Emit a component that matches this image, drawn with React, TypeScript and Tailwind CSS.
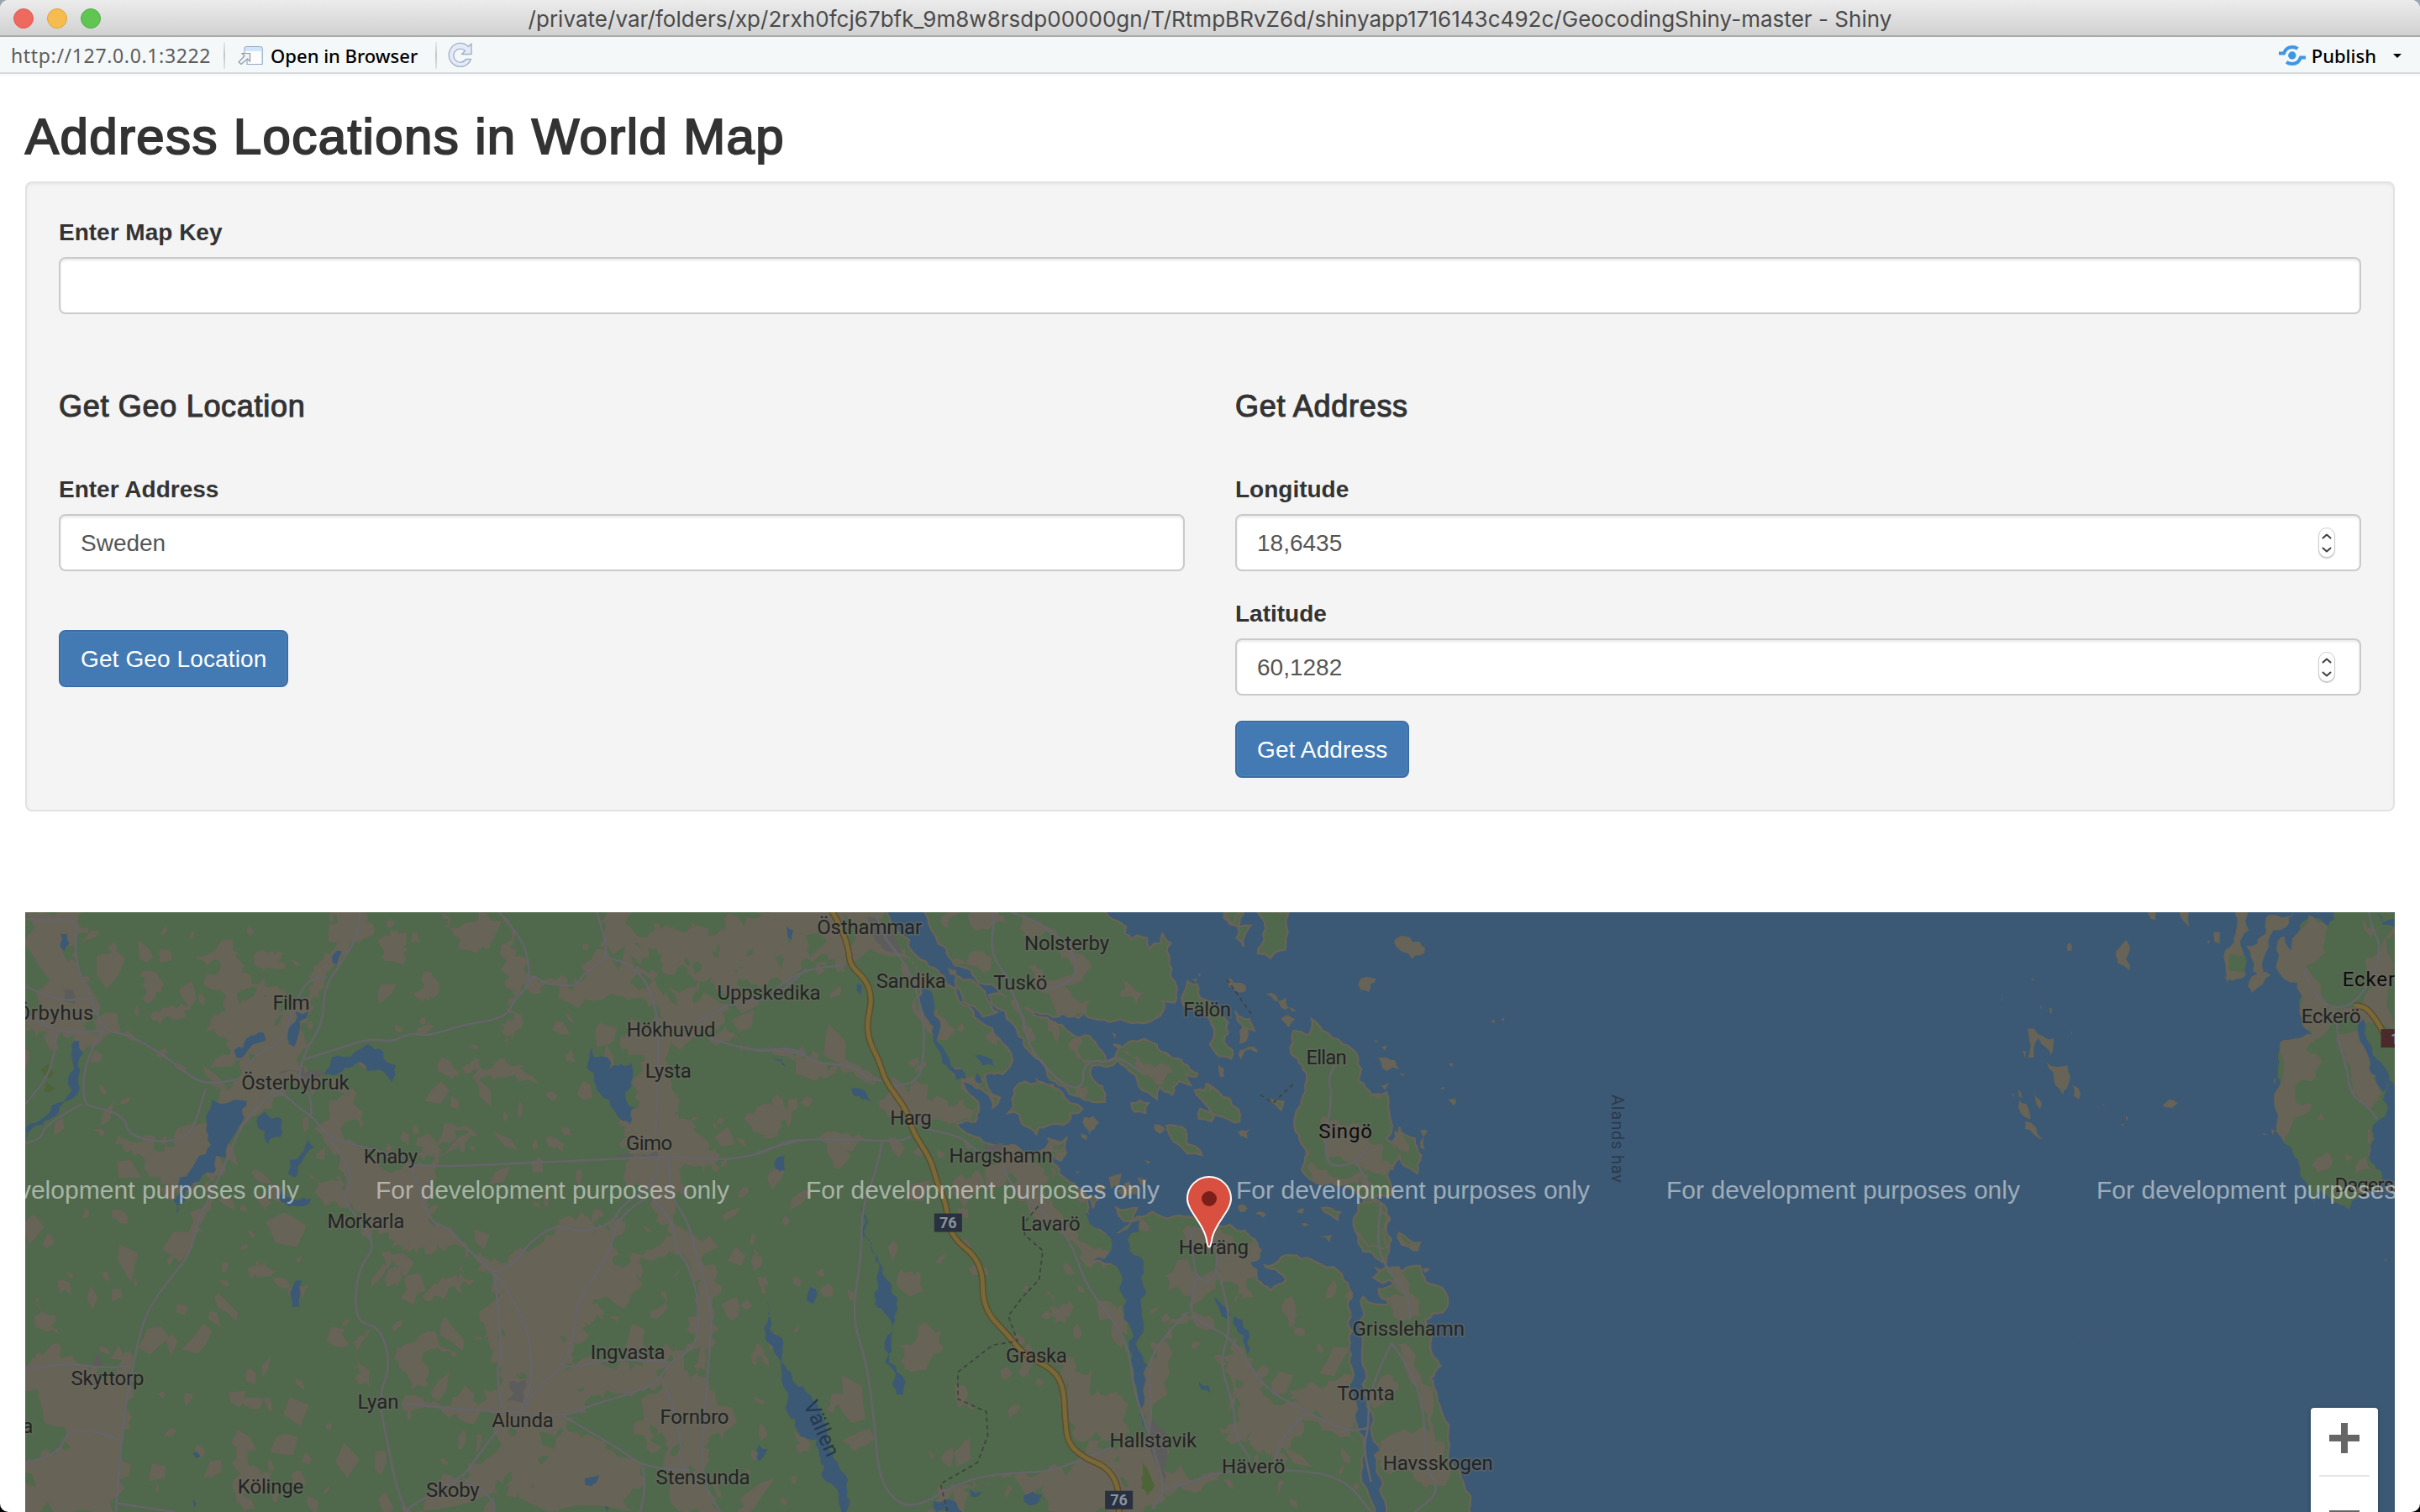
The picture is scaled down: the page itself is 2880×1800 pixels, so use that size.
import type { ReactNode } from "react";

type Pt = [number, number];
type Tile = { x: number; y: number; sx: number; sy: number };

// Map sheets: origin on the map and units-to-pixels scale of each one.
const W: Tile = { x: -30, y: -6, sx: 0.61224, sy: 0.45918 };
const M: Tile = { x: 870, y: -6, sx: 0.61224, sy: 0.45918 };
const E: Tile = { x: 1830, y: -6, sx: 0.65051, sy: 0.45918 };
const N: Tile = { x: 970, y: -6, sx: 1 / 3, sy: 1 / 3 };

const GREEN = "#50684c";
const BROWN = "#676357";
const WATER = "#3b5974";
const ROAD = "#656468";

function rng(seed: number) {
  let s = seed;
  return () => {
    s = (s * 1664525 + 1013904223) % 4294967296;
    return s / 4294967296;
  };
}

function pts(t: Tile, s: string): Pt[] {
  return s
    .trim()
    .split(/\s+/)
    .map((p) => {
      const [a, b] = p.split(",").map(Number);
      return [t.x + a * t.sx, t.y + b * t.sy] as Pt;
    });
}

// Breaks long edges up with small sideways steps, for a ragged shore line.
function rough(p: Pt[], amp: number, close = true): Pt[] {
  let cur = p;
  const r = rng(Math.round(p[0][0] * 7 + p[0][1] * 13 + p.length * 101) >>> 0);
  for (let k = 0; k < 3; k++) {
    const next: Pt[] = [];
    cur.forEach((a, i) => {
      next.push(a);
      if (i === cur.length - 1 && !close) return;
      const b = cur[(i + 1) % cur.length];
      const dx = b[0] - a[0];
      const dy = b[1] - a[1];
      const len = Math.hypot(dx, dy);
      if (len < 9 || len > 500) return;
      const d = (r() - 0.5) * 2 * amp * Math.min(len * 0.2, 7);
      next.push([(a[0] + b[0]) / 2 - (dy / len) * d, (a[1] + b[1]) / 2 + (dx / len) * d]);
    });
    cur = next;
  }
  return cur;
}

function d(p: Pt[], close = true) {
  return "M" + p.map(([x, y]) => `${x.toFixed(1)} ${y.toFixed(1)}`).join("L") + (close ? "Z" : "");
}

function shapes(t: Tile, list: string[], amp = 1) {
  return list.map((s) => d(rough(pts(t, s), amp))).join("");
}

function smooth(t: Tile, s: string) {
  const p = pts(t, s);
  let out = `M${p[0][0].toFixed(1)} ${p[0][1].toFixed(1)}`;
  for (let i = 1; i < p.length - 1; i++) {
    const mx = (p[i][0] + p[i + 1][0]) / 2;
    const my = (p[i][1] + p[i + 1][1]) / 2;
    out += `Q${p[i][0].toFixed(1)} ${p[i][1].toFixed(1)} ${mx.toFixed(1)} ${my.toFixed(1)}`;
  }
  const l = p[p.length - 1];
  return out + `L${l[0].toFixed(1)} ${l[1].toFixed(1)}`;
}

// Small fields scattered between the forests.
function fields(seed: number, n: number, x0: number, y0: number, x1: number, y1: number, size: number) {
  const r = rng(seed);
  let out = "";
  for (let i = 0; i < n; i++) {
    const cx = x0 + r() * (x1 - x0);
    const cy = y0 + r() * (y1 - y0);
    const k = 4 + Math.floor(r() * 4);
    const rot = 1.57 + (r() - 0.5) * 2.2;
    const big = size * (0.35 + r() * r() * 1.3);
    const flat = 0.35 + r() * 0.5;
    const p: Pt[] = [];
    for (let j = 0; j < k; j++) {
      const a = (j / k) * 6.28;
      const q = big * (0.35 + r() * 0.9);
      const u = Math.cos(a) * q;
      const v = Math.sin(a) * q * flat;
      p.push([cx + u * Math.cos(rot) - v * Math.sin(rot), cy + u * Math.sin(rot) + v * Math.cos(rot)]);
    }
    out += d(p);
  }
  return out;
}

const MAINLAND =
  "-1550,5 258,5 267,44 299,83 321,134 354,163 370,196 389,210 395,240 425,283 460,312 490,363 500,396 495,414 479,436 446,436 472,490 460,515 452,490 435,472 403,454 408,472 425,494 435,519 427,559 392,563 403,577 435,595 479,617 512,624 540,640 570,600 603,600 605,640 575,655 590,690 610,710 640,740 645,790 665,825 690,850 715,830 740,800 770,787 810,800 840,800 880,815 920,820 950,835 975,870 980,910 960,920 975,965 1000,990 1028,965 1000,940 985,925 1020,905 1060,910 1100,925 1140,950 1160,1000 1160,1100 1155,1180 1170,1300 1180,1450 1200,1600 -1550,1600";

const PENINSULA =
  "290,0 930,0 960,35 990,50 1020,70 1015,95 1040,115 1060,100 1095,110 1105,150 1120,130 1145,130 1150,95 1165,120 1180,130 1165,155 1175,190 1180,250 1200,280 1195,340 1150,335 1155,365 1120,400 1060,412 1000,400 920,402 885,393 870,378 850,395 820,390 800,375 780,390 740,380 700,375 660,357 690,385 740,395 790,420 830,455 890,460 930,510 950,550 980,540 1000,495 975,490 1010,500 1060,480 1085,470 1130,490 1175,530 1225,560 1275,595 1270,605 1235,595 1250,635 1210,620 1185,670 1140,640 1130,685 1110,670 1080,655 1060,615 1020,570 990,545 950,570 900,565 890,590 935,640 945,695 900,695 850,675 800,640 740,600 700,540 670,510 655,470 620,420 590,370 560,360 530,315 590,320 560,290 480,250 440,215 390,180 350,130 325,80";

const SINGO =
  "1045,320 1075,330 1080,290 1100,320 1140,355 1170,390 1170,450 1195,490 1225,480 1230,530 1225,600 1240,620 1250,570 1280,600 1285,690 1260,670 1250,640 1230,680 1235,745 1200,755 1225,780 1230,890 1225,920 1200,900 1170,870 1165,840 1180,770 1140,715 1100,720 1060,680 1070,640 1055,590 1060,500 1070,450 1040,380";

const GRISSLEHAMN =
  "1180,1010 1230,1030 1210,990 1240,970 1200,960 1225,930 1290,930 1300,970 1340,1000 1335,1050 1300,1070 1310,1130 1330,1190 1310,1220 1330,1300 1345,1360 1355,1450 1370,1480 1385,1520 1385,1600 1220,1600 1215,1480 1195,1350 1185,1200 1175,1100";

const ISLANDS_N = [
  "1240,265 1275,275 1300,330 1360,380 1385,450 1370,480 1400,510 1395,540 1340,520 1320,490 1335,460 1300,380 1225,350 1230,300",
  "620,650 660,623 740,635 800,680 820,700 865,720 850,735 820,735 815,765 740,780 710,785 700,810 680,790 650,775 640,740 600,735 615,720",
  "1165,780 1220,785 1290,885 1240,880 1180,820",
  "1310,630 1350,660 1420,720 1425,765 1370,750 1300,700 1265,655 1300,655",
  "1285,720 1335,745 1325,765 1280,755",
  "1040,700 1100,700 1090,735 1050,730",
  "535,670 570,680 545,715",
  "1410,370 1460,400 1478,440 1440,430",
  "1370,10 1440,10 1420,70 1390,60",
  "1420,70 1465,65 1440,140 1415,110",
  "415,245 470,260 520,320 560,375 510,390 440,340 415,285",
  "740,825 770,850 810,820 800,860 760,870",
];

const ISLANDS_M = [
  "975,13 1035,13 1030,50 1028,110 1000,132 975,120 985,70",
  "910,13 945,13 925,45",
  "1170,770 1200,760 1225,800 1228,880 1190,880 1165,840",
  "1250,845 1290,870 1285,890 1255,875",
  "1000,500 1025,505 1020,525",
  "700,780 740,780 730,815 705,800",
  "645,750 665,755 655,780",
  "1100,780 1135,790 1130,810",
];

const SKERRIES_M = [
  "1240,95 1262,75 1275,90 1300,105 1290,125 1275,135 1255,115",
  "1170,200 1185,180 1205,185 1190,220 1175,215",
  "990,225 1030,235 1050,270 1020,260",
  "1020,290 1048,290 1035,312",
  "915,185 945,200 950,220 930,215",
  "1200,385 1225,390 1250,420 1225,425",
  "1245,845 1290,880 1280,890 1255,870",
  "1095,855 1120,850 1115,870",
  "870,457 890,470 880,485",
  "1345,405 1355,405 1352,415",
  "1345,500 1358,495 1355,515",
  "1428,295 1435,290 1435,302",
  "1448,290 1455,285 1452,296",
  "1330,470 1337,465 1336,474",
  "1200,345 1208,345 1205,352",
  "1215,362 1226,358 1222,372",
  "1250,430 1262,432 1256,438",
  "1290,580 1305,580 1300,630 1290,610",
  "1295,940 1310,940 1300,948",
  "1205,460 1230,455 1222,475",
  "755,655 766,660 762,666",
  "685,700 710,690 705,725 690,730",
  "700,735 725,710 740,745 715,755",
  "740,700 760,705 755,730",
  "660,715 680,725 675,745 660,735",
  "620,745 640,735 640,765 625,760",
  "935,775 955,780 940,790",
  "970,795 985,790 1000,800 985,805",
  "1060,820 1075,823 1065,828",
  "1050,790 1065,780 1062,795",
  "1175,700 1190,690 1200,720 1185,735",
];

const SKERRIES_N = [
  "870,750 925,770 890,815",
  "1120,775 1160,790 1140,810",
  "695,605 760,630 775,655 740,635",
  "1380,260 1430,270 1450,295 1410,295",
  "1425,510 1490,510 1490,520 1440,522 1430,545",
  "1425,440 1455,430 1450,480 1425,490",
  "400,570 440,580 435,610 400,600",
  "385,215 415,225 415,245 390,240",
  "1350,560 1372,605 1355,605",
  "1408,797 1462,790 1455,828",
  "1255,258 1275,255 1270,268",
  "1276,235 1287,240 1284,250",
  "970,445 985,455 980,470",
  "770,880 810,880 790,910 765,900",
  "750,930 770,940 755,970",
  "858,808 882,815 880,832",
  "1095,905 1107,908 1100,917",
  "840,942 854,945 846,952",
];

const ISLES_E = [
  "1070,13 1085,13 1085,34 1075,30",
  "1128,13 1145,13 1146,50 1138,40",
  "1018,105 1030,85 1038,105 1030,135 1038,165 1015,145",
  "1190,65 1202,65 1202,95 1192,90",
  "1230,10 1253,10 1255,60 1240,100 1250,175 1215,185 1212,110 1228,90",
  "1290,20 1340,15 1325,50 1300,60 1280,180 1262,165 1250,100 1270,95",
  "1305,110 1320,75 1330,110 1350,130 1350,185 1330,195 1310,170",
  "1210,180 1222,180 1216,205",
  "1260,180 1295,175 1280,200 1260,222 1253,205",
  "850,315 862,315 870,330 898,340 892,385 885,365 870,340 862,390 850,390 853,345",
  "885,402 923,410 922,470 915,487 900,460",
  "932,460 943,470 944,498 935,490",
  "862,475 873,500 873,523 866,510",
  "835,500 848,510 855,550 838,535",
  "846,555 865,570 878,602 862,590 845,575",
  "1096,515 1110,498 1125,508 1115,520",
  "831,470 838,480 840,495 833,490",
  "840,370 847,375 845,392",
  "922,98 928,92 931,112 923,114",
  "856,186 861,184 860,192",
  "802,236 805,238 804,244",
  "873,256 876,256 875,267",
  "890,260 894,262 895,276 891,274",
  "930,322 932,322 931,332",
  "1029,541 1034,545 1031,556",
  "1022,562 1026,562 1024,570",
  "821,480 826,486 824,493",
  "1178,88 1184,86 1182,96",
  "988,510 992,513 988,514",
  "1295,575 1302,578 1298,590",
  "1280,586 1288,587 1284,592",
  "1300,450 1304,440 1304,462",
  "1503,912 1507,912 1506,921",
];

const ALAND =
  "1348,60 1365,20 1385,30 1400,50 1412,5 1600,5 1600,460 1522,462 1508,445 1500,500 1510,520 1490,555 1480,580 1490,600 1478,660 1500,690 1500,710 1460,750 1438,785 1420,770 1400,750 1380,735 1373,768 1365,730 1350,700 1345,655 1330,620 1315,600 1305,570 1322,520 1312,470 1308,430 1312,350 1330,342 1370,330 1360,300 1372,280 1348,260 1355,200 1360,140";

const WEST_FIELDS = [
  "50,13 158,13 148,80 160,180 190,240 200,330 150,370 110,330 50,290",
  "380,125 425,97 465,135 470,170 490,200 530,205 555,230 540,290 580,250 600,180 635,180 630,210 600,300 585,380 600,430 560,450 530,520 480,560 440,680 410,770 380,860 360,900 330,930 390,780 400,690 330,760 300,700 270,680 270,640 230,590 290,590 340,620 400,560 405,450 470,430 440,390 450,330 400,320 410,290 440,270 430,150",
  "480,125 520,120 555,160 500,155",
  "640,13 710,13 700,90 660,150 630,180 600,180 640,120",
  "640,500 685,470 695,520 700,575 640,570",
  "640,620 690,610 740,640 800,670 850,700 830,760 870,830 910,890 900,910 850,870 840,900 780,890 800,850 760,890 720,840 660,780 610,740 600,690 670,720 660,660",
  "810,600 920,580 930,590 850,620 870,650 810,640",
  "860,13 950,13 960,70 930,120 900,100 880,60 860,50",
  "970,13 1000,60 1020,130 1040,180 1080,190 1140,180 1180,130 1230,150 1250,220 1170,240 1050,210 1000,270 985,370 970,300 1000,230 990,180",
  "1180,13 1230,13 1260,110 1230,150 1190,120",
  "1270,40 1330,20 1400,60 1470,30 1568,40 1568,120 1520,150 1490,200 1430,150 1400,220 1350,190 1290,170 1260,100",
  "1240,150 1290,230 1400,250 1410,290 1370,330 1440,350 1470,370 1380,350 1300,370 1300,420 1330,480 1320,550 1370,600 1400,640 1320,680 1340,740 1310,760 1350,850 1370,930 1390,1050 1385,1140 1380,1250 1420,1350 1380,1430 1400,1568 1340,1568 1300,1400 1250,1300 1310,1180 1350,1130 1360,1000 1330,900 1300,820 1270,730 1210,700 1200,560 1240,520 1250,420 1210,370 1270,330 1260,260",
  "910,900 960,910 1000,890 1080,830 1100,800 1150,850 1200,790 1210,850 1190,920 1240,900 1310,880 1250,980 1180,1010 1150,1030 1200,1080 1120,1080 1110,1160 1100,1200 1160,1170 1250,1190 1300,1180 1280,1240 1240,1250 1140,1310 1100,1320 1160,1380 1250,1450 1230,1568 800,1568 850,1500 910,1440 960,1360 950,1310 860,1310 780,1290 880,1270 970,1250 960,1150 920,1120 930,1050 970,1030 960,960",
  "850,410 930,400 980,390 1020,410 970,440 930,460 900,420 880,450",
  "640,1100 720,1095 700,1140 720,1245 700,1210 690,1130",
  "780,1140 850,1120 890,1160 830,1190 800,1250 780,1200",
  "50,1190 110,1130 120,1170 190,1180 240,1200 250,1150 270,1160 240,1300 235,1400 220,1568 50,1568 50,1440 110,1420 130,1360 80,1290",
  "70,1010 110,1060 115,1110 90,1100",
  "300,270 370,250 350,290 310,310",
  "270,180 310,185 315,220 290,250",
  "750,40 790,80 750,140 740,100",
  "820,180 850,190 830,230 790,225",
  "490,930 540,940 600,980 560,1010 500,960",
  "860,960 900,930 900,1000 840,1020 820,1010",
  "450,1440 475,1390 490,1460 520,1500 450,1500",
  "1500,500 1550,490 1530,550 1500,600 1480,580",
];

const MID_FIELDS = [
  "0,13 250,13 270,80 300,130 330,220 340,330 310,280 290,130 240,120 180,160 120,130 60,200 20,170 50,110",
  "330,230 400,300 380,330 340,330",
  "10,370 110,370 120,400 200,410 240,440 230,460 140,440 110,450",
  "240,500 310,450 370,500 430,520 420,560 330,570 300,570 270,540",
  "0,520 80,500 50,570 10,590",
  "120,600 210,600 160,680 140,640",
  "470,610 540,640 570,700 560,760 600,810 640,870 690,900 640,930 600,850 530,790 480,700 490,660",
  "0,1130 15,1150 5,1190",
  "270,1120 340,1090 360,1100 330,1200 280,1180",
  "280,940 320,960 300,1010 280,990",
  "500,1150 600,1190 590,1290 620,1380 690,1400 720,1340 700,1260 640,1290 650,1200 600,1170",
  "560,1000 610,1020 600,1080 570,1060",
  "680,1020 720,1070 730,1150 690,1110",
  "760,1190 800,1080 870,1060 900,1100 830,1080 800,1130 770,1330 800,1400 790,1460 900,1470 870,1500 790,1520 740,1568 600,1568 560,1500 440,1500 370,1520 330,1568 300,1568 420,1470 550,1470 640,1430 740,1400 760,1320",
  "840,1000 860,960 900,950 900,880 830,870 850,830 960,870 970,960 930,1030 900,960 850,1050",
  "910,1110 950,1150 980,1250 1070,1310 1150,1340 1180,1390 1060,1330 1020,1400 1030,1440 960,1450 960,1380 900,1350 940,1330 910,1200",
  "1040,1050 1060,1045 1050,1100",
  "1090,1240 1160,1230 1165,1330 1060,1310",
  "160,1260 190,1270 150,1310",
  "400,690 430,680 410,770 400,800",
];

const MID_FIELDS_EAST = [
  "1100,540 1130,550 1170,560 1220,620 1240,680 1200,690 1170,670 1110,650",
  "1080,620 1110,680 1180,690 1170,720 1080,700",
  "1240,580 1260,600 1270,650 1250,630",
  "1195,480 1225,500 1215,490",
  "1200,930 1250,930 1290,1060 1250,1070 1220,1010 1260,1010",
  "1230,1130 1270,1140 1310,1330 1300,1450 1290,1300",
  "1185,1250 1230,1210 1250,1240 1200,1300",
  "1200,1420 1300,1340 1340,1400 1340,1500 1300,1510 1250,1460",
];

const PENINSULA_FIELDS = [
  "380,20 430,20 390,80 360,60",
  "470,10 560,10 600,60 530,80 460,50",
  "650,20 740,70 780,100 700,110 640,75",
  "395,190 510,155 540,220 480,210",
  "670,210 760,260 830,240 790,180 820,120 870,170 850,270 800,280 840,330 890,330 880,380 760,350 700,290",
  "1000,255 1040,280 1090,300 1060,330 1075,355 1000,320",
  "830,470 860,465 850,520 900,550 870,560 820,510",
  "1010,510 1060,530 1080,560 1165,560 1190,590 1140,640 1080,600",
  "610,330 650,380 690,450 700,540 650,440",
  "720,390 780,430 770,500 740,440",
  "850,640 880,640 875,680 840,670",
];

const EAST_FIELDS = [
  "1348,60 1365,20 1400,50 1395,120 1360,150 1380,190 1400,260 1440,260 1480,210 1470,130 1490,120 1522,50 1522,320 1480,300 1440,280 1400,320 1360,370 1390,400 1350,450 1340,500 1370,510 1335,560 1320,610 1305,570 1312,350 1370,330 1348,260",
  "1420,330 1460,310 1480,400 1500,480 1480,520 1440,480 1430,400",
  "1370,670 1400,635 1410,660 1380,690",
  "1470,560 1480,600 1470,650 1490,690 1450,690 1480,640",
  "1430,640 1447,650 1435,662",
  "1378,550 1385,530 1395,552",
  "1460,30 1490,60 1480,80 1465,60",
];

const LAKES_W = [
  "118,70 130,70 135,95 125,113 117,95",
  "655,112 665,115 655,148 646,145",
  "575,270 600,270 580,330 572,362 562,355 560,320",
  "455,372 480,340 512,325 517,345 475,385 460,390",
  "630,435 645,390 690,375 715,355 745,375 750,400 770,410 762,455 745,425 715,425 700,400 670,415 660,430",
  "145,347 153,347 155,470 125,505 95,550 50,602 50,572 90,540 100,515 140,475 133,440",
  "412,498 430,510 455,500 480,503 475,545 455,590 440,650 420,645 415,690 375,715 360,760 342,795 337,760 350,700 380,660 400,640 405,590",
  "500,545 515,530 548,550 545,595 525,600 520,615 515,580 500,565",
  "597,590 612,625 590,650 575,700 560,690 563,655 585,640",
  "550,730 575,760 605,755 600,770 560,775 545,745",
  "575,968 587,968 582,1035 568,1038 564,1000",
  "1142,405 1150,362 1155,390 1180,388 1185,420 1200,410 1228,405 1230,440 1215,480 1225,562 1200,540 1185,500 1165,480 1155,440",
  "1530,48 1542,60 1538,85 1532,80",
  "1510,650 1525,645 1525,680 1508,680",
  "1137,1480 1165,1472 1160,1490 1137,1498",
  "1475,1395 1492,1405 1475,1437",
  "375,1415 383,1412 390,1425 380,1428",
  "375,1535 382,1545 378,1557",
  "1176,1553 1183,1555 1180,1568",
  "1500,390 1520,400 1528,415",
];

const LAKES_M = [
  "205,770 212,830 225,870 250,960 272,1030 270,1070 255,1110 258,1180 290,1230 285,1265 272,1262 270,1220 250,1180 248,1050 238,980 230,900 203,850",
  "18,1020 40,1110 60,1200 100,1260 130,1330 150,1430 172,1470 175,1500 160,1600 150,1500 125,1430 118,1380 60,1310 62,1260 48,1190 15,1090",
  "640,790 690,850 745,810 722,860 748,960 742,1120 752,1210 752,1330 758,1355 750,1340 735,1210 725,1080 720,1020 700,930 655,915 690,890",
  "890,1010 915,1040 918,1070 905,1060",
  "930,1060 945,1070 958,1100 955,1160 948,1110 935,1100",
  "860,1230 880,1240 882,1260 865,1250",
  "185,470 215,485 222,505 190,490",
  "195,200 205,200 203,230",
  "105,985 115,990 110,1028 98,1020",
  "48,645 55,680 45,685 38,670",
  "415,1510 438,1515 425,1530 418,1528",
  "520,1525 555,1522 550,1540 530,1550",
  "345,1540 370,1535 400,1568 350,1568",
  "320,205 330,210 345,270 358,310 350,345 370,380 378,410 400,420 408,445 390,448 375,420 360,380 345,350 345,310 325,270",
  "425,385 460,395 465,415 440,410",
  "430,430 440,455 425,450",
];

const ROADS_W = [
  "50,30 90,35 140,30 150,60 145,110 155,180 180,240 200,320 250,330 320,385 360,430 400,460 470,445",
  "200,320 120,330 70,290 50,280",
  "200,320 165,390 160,510 190,520 240,540 250,590 310,610 360,600 380,560 400,470",
  "110,330 105,420 50,510",
  "160,510 90,560 80,600 50,612",
  "700,13 695,80 660,150 630,210 628,300 590,380 580,450",
  "635,180 600,180 570,260 550,350 510,370 480,410",
  "590,395 650,370 720,340 760,350 800,325 830,335 900,305 950,295 985,280 1000,240 1030,200 1025,110 990,40 970,13",
  "1030,200 1030,170 1060,200 1125,205 1130,175 1175,140 1180,100 1160,13",
  "1175,130 1220,140 1255,190 1275,260 1280,330 1275,590",
  "530,480 540,470 580,520 610,545 640,600 700,620 760,640 800,675 1000,665 1200,652 1330,645 1400,657 1480,640 1530,605 1568,603",
  "530,480 510,510 470,560 440,660 400,770 380,830 370,900 320,980 280,1060 260,1180 240,1320 225,1568",
  "640,600 680,670 680,720 665,760 700,810 730,880 700,930 690,1010 695,1075 740,1090 760,1190 735,1270 755,1400 770,1500 790,1568",
  "605,540 605,490 590,470",
  "800,675 820,750 840,820 870,830 910,890 960,945 1000,1020 1030,1110 1035,1230 1010,1310",
  "960,945 970,1050 975,1170 965,1200 975,1300",
  "960,945 1000,930 1020,880 1080,820 1130,845 1190,820 1210,770 1270,720 1280,650",
  "1260,750 1200,800 1190,880 1150,970 1120,1030 1115,1120 1095,1190 1040,1250 1020,1300",
  "1300,650 1300,740 1340,820 1355,910 1385,1040 1380,1140 1370,1300 1362,1480 1400,1568",
  "1270,760 1310,810 1310,880 1340,930 1360,1030 1355,1140 1300,1180 1280,1230 1230,1260 1150,1290 1100,1320 1020,1310 870,1300 780,1285",
  "1095,1190 1120,1195 1180,1170 1300,1180",
  "970,1350 930,1420 900,1480 800,1550 790,1568",
  "1095,1320 1160,1370 1210,1410 1250,1450 1340,1460",
  "1290,1230 1310,1300 1325,1390 1320,1430 1335,1460",
  "50,1200 120,1180 200,1195 250,1190",
  "50,1440 110,1425 130,1360 175,1355 230,1380",
  "1350,300 1400,265 1420,250 1500,240 1568,160",
  "1380,340 1450,370 1500,370 1530,365 1568,380",
  "50,205 110,245 180,235",
  "900,1480 960,1530 960,1568",
  "1250,1450 1255,1500 1245,1568",
  "225,1545 340,1568",
];

const ROADS_M = [
  "250,80 290,140 320,250 328,340 320,450 268,465",
  "0,372 80,370 115,405 190,410 215,445 245,450",
  "0,638 70,605 140,600 280,608 300,595",
  "40,210 80,165 170,150",
  "245,610 230,700 205,780 205,900 185,1060 215,1180 230,1340 240,1500 300,1568 400,1485 500,1465 560,1465 620,1440 690,1400",
  "330,575 390,590 420,620 450,660",
  "480,670 490,720 560,790 610,860 640,980 700,1080 725,1150 735,1260 760,1350 780,1440 795,1510 770,1560",
  "795,1510 880,1475 920,1460 1080,1460 1150,1490 1195,1568",
  "845,840 850,910 855,965 895,970 895,850 850,830",
  "895,940 915,1010 920,1110 900,1180 930,1300 930,1370 960,1430",
  "855,965 838,1050 870,1080 930,1120 980,1240 1070,1310 1150,1360 1190,1350",
  "838,1050 800,1100 760,1180 770,1300 760,1400",
  "1070,1310 1020,1370 1010,1440",
  "1215,765 1205,850 1220,930 1270,1010 1270,1070",
  "1235,1130 1275,1200 1300,1320 1300,1450 1330,1515 1280,1568",
  "1235,1130 1205,1210 1190,1290 1190,1350 1180,1400 1195,1490",
  "1125,410 1110,440 1120,490 1105,600 1110,675 1165,665 1190,620",
  "1165,660 1190,710 1190,760",
];

const ROADS_N = [
  "545,18 550,60 540,100 545,180 590,240 620,320 650,390 675,500 740,580 800,635 850,648 870,620 865,580 900,545 950,555 990,530 1075,590",
  "610,18 690,45 740,80 820,140 845,210 830,260 770,290 700,285",
  "130,18 135,70 200,165",
];

const HIGHWAY =
  "145,5 165,50 180,110 182,150 215,190 225,240 215,300 220,350 240,400 250,450 295,530 303,580 340,655 350,710 370,770 375,850 440,920 440,1040 490,1110 520,1160 580,1200 598,1250 600,1320 605,1390 640,1430 680,1450 705,1500 705,1580";

type Label = [Tile, number, number, number, string, boolean?];

// Sheet, left edge, baseline, right edge, name.
const LABELS: Label[] = [
  [W, 32, 290, 182, "Örbyhus"],
  [W, 530, 264, 602, "Film"],
  [W, 469, 472, 679, "Österbybruk"],
  [W, 707, 664, 812, "Knaby"],
  [W, 636, 831, 786, "Morkarla"],
  [W, 1218, 334, 1391, "Hökhuvud"],
  [W, 1254, 442, 1344, "Lysta"],
  [W, 1217, 628, 1307, "Gimo"],
  [W, 1148, 1171, 1293, "Ingvasta"],
  [W, 138, 1237, 280, "Skyttorp"],
  [W, 695, 1300, 775, "Lyan"],
  [W, 956, 1347, 1076, "Alunda"],
  [W, 1283, 1339, 1417, "Fornbro"],
  [W, 1275, 1495, 1458, "Stensunda"],
  [W, 462, 1520, 590, "Kölinge"],
  [W, 828, 1527, 932, "Skoby"],
  [W, 43, 1363, 62, "a"],
  [W, 1394, 238, 1595, "Uppskedika"],
  [M, 118, 69, 322, "Östhammar"],
  [M, 521, 109, 686, "Nolsterby"],
  [M, 233, 208, 369, "Sandika"],
  [M, 461, 212, 566, "Tuskö"],
  [M, 830, 283, 923, "Fälön"],
  [M, 1069, 406, 1148, "Ellan"],
  [M, 1093, 597, 1197, "Singö", true],
  [M, 260, 564, 341, "Harg"],
  [M, 375, 661, 576, "Hargshamn"],
  [M, 514, 838, 630, "Lavarö"],
  [M, 821, 898, 957, "Herräng"],
  [M, 1159, 1110, 1377, "Grisslehamn"],
  [M, 485, 1179, 604, "Graska"],
  [M, 1129, 1277, 1241, "Tomta"],
  [M, 687, 1400, 856, "Hallstavik"],
  [M, 905, 1467, 1028, "Häverö"],
  [M, 1218, 1459, 1432, "Havsskogen"],
  [E, 1426, 203, 1544, "Eckerö", true],
  [E, 1351, 299, 1460, "Eckerö"],
  [E, 1412, 738, 1577, "Dagersand"],
];

function Shield({ t, x, y, text, fill }: { t: Tile; x: number; y: number; text: string; fill: string }) {
  const px = t.x + x * t.sx;
  const py = t.y + y * t.sy;
  return (
    <g>
      <rect x={px - 16.5} y={py - 11} width={33} height={22} fill={fill} />
      <text x={px} y={py + 6.5} textAnchor="middle" fontSize={18} fontWeight={700} fill="#8b93a0">
        {text}
      </text>
    </g>
  );
}

function MapDrawing() {
  return (
    <svg className="block h-[714px] w-[2820px]" viewBox="0 0 2820 714" fontFamily="Roboto, sans-serif">
      <defs>
        <clipPath id="mainland">
          <path d={shapes(M, [MAINLAND])} />
        </clipPath>
      </defs>
      <rect width={2820} height={714} fill={WATER} />
      <path d={shapes(M, [MAINLAND])} fill={GREEN} />
      <g clipPath="url(#mainland)">
        <path d={fields(11, 330, 0, 0, 930, 714, 19)} fill={BROWN} />
        <path d={fields(29, 160, 930, 0, 1600, 714, 20)} fill={BROWN} />
        <path d={shapes(W, WEST_FIELDS, 2.4)} fill={BROWN} />
        <path d={shapes(M, MID_FIELDS, 2.2)} fill={BROWN} />
        <path d={fields(71, 26, 560, 400, 800, 714, 15)} fill={GREEN} />
        <path d={fields(83, 46, 700, 0, 1080, 120, 14)} fill={GREEN} />
        <path d={fields(97, 18, 250, 80, 380, 330, 9)} fill={GREEN} />
        <path d={fields(101, 16, 1280, 560, 1560, 714, 14)} fill={GREEN} />
        <path d={shapes(M, [MAINLAND])} fill="none" stroke={BROWN} strokeWidth={5} />
      </g>
      <g stroke={BROWN} strokeWidth={2.5}>
        <path d={shapes(N, [PENINSULA])} fill={GREEN} />
        <path d={shapes(M, [SINGO, GRISSLEHAMN])} fill={GREEN} />
        <path d={shapes(N, ISLANDS_N)} fill={GREEN} />
        <path d={shapes(M, ISLANDS_M)} fill={GREEN} />
      </g>
      <path d={shapes(N, PENINSULA_FIELDS, 1.5) + shapes(M, MID_FIELDS_EAST, 1.5)} fill={BROWN} />
      <path d={shapes(M, SKERRIES_M, 1.6) + shapes(N, SKERRIES_N, 1.4)} fill={BROWN} />
      <path d={shapes(E, [ALAND])} fill={GREEN} />
      <path d={shapes(E, EAST_FIELDS, 1.2) + shapes(E, ISLES_E)} fill={BROWN} />
      <path d={shapes(E, ["1222,120 1248,125 1250,178 1220,165"])} fill={GREEN} />
      <path
        d={shapes(E, [
          "1455,300 1465,290 1480,360 1495,400 1510,430 1500,480 1490,460 1475,420 1465,360",
          "1490,13 1500,40 1522,30 1522,50 1500,45",
          "1482,580 1500,560 1522,550 1522,640 1510,690 1500,705 1478,660",
        ])}
        fill={WATER}
      />
      <path d={shapes(W, LAKES_W, 1.2) + shapes(M, LAKES_M, 1.2)} fill={WATER} />
      <path
        d={
          shapes(W, ["120,208 135,212 145,250 125,245", "540,430 580,425 590,395 592,430 635,432 600,445", "1200,640 1278,634 1280,648 1200,648", "990,1230 1022,1225 1020,1290 985,1280 1000,1260", "190,1155 197,1195 178,1190"], 1) +
          shapes(M, ["215,25 270,80 285,120 255,115 230,80", "445,610 480,612 475,640 445,635", "770,1330 800,1400 795,1500 775,1440"], 1)
        }
        fill="#5d5c5c"
      />
      <path d={shapes(W, ["80,420 95,405 105,430 85,445 108,470 85,478 90,440"]) + shapes(M, ["750,1440 765,1470 775,1500 760,1525 748,1480"])} fill="#4c6437" />
      <g fill="none" stroke={ROAD} strokeWidth={2.6} strokeLinejoin="round">
        {ROADS_W.map((r) => <path key={r} d={smooth(W, r)} />)}
        {ROADS_M.map((r) => <path key={r} d={smooth(M, r)} />)}
        {ROADS_N.map((r) => <path key={r} d={smooth(N, r)} />)}
        <path d={smooth(E, "1475,13 1480,60 1495,90 1490,160 1450,250 1410,265 1375,230 1355,160")} />
        <path d={smooth(E, "1415,290 1418,350 1435,420 1440,485 1475,520 1490,550")} />
      </g>
      <g fill="none" strokeLinejoin="round">
        <path d={smooth(M, HIGHWAY)} stroke="#594e30" strokeWidth={8} />
        <path d={smooth(M, HIGHWAY)} stroke="#7a6936" strokeWidth={5} />
        <path d={smooth(E, "1448,255 1465,255 1485,285 1505,335")} stroke="#594e30" strokeWidth={8} />
        <path d={smooth(E, "1448,255 1465,255 1485,285 1505,335")} stroke="#7a6936" strokeWidth={5} />
      </g>
      <g fill="none" stroke="#3d413d" strokeWidth={1.6} strokeDasharray="5 4">
        <path d={d(pts(M, "548,775 520,820 522,850 557,890 550,965 515,1015 490,1060 508,1125 460,1135 392,1205 392,1275 447,1308 450,1370 430,1440 358,1495 372,1568"), false)} />
        <path d={d(pts(M, "915,187 965,282"), false)} />
        <path d={d(pts(M, "980,487 1005,507 1045,457"), false)} />
      </g>
      <path d={d(pts(E, "940,1131 1055,1133"), false)} stroke="#41566a" strokeWidth={1.5} strokeDasharray="6 5" />
      <Shield t={M} x={373} y={818} text="76" fill="#29303f" />
      <Shield t={M} x={705} y={1537} text="76" fill="#29303f" />
      <Shield t={E} x={1522} y={340} text="1" fill="#4a2a2a" />
      <g fontSize={24}>
        {LABELS.map(([t, x0, y, x1, name, strong]) => (
          <text
            key={name + x0}
            x={t.x + x0 * t.sx}
            y={t.y + y * t.sy + 0.5}
            textLength={(x1 - x0) * t.sx}
            fill={strong ? "#0c0c0c" : "#232423"}
            stroke="#6a6a62"
            strokeOpacity={0.45}
            strokeWidth={4}
            strokeLinejoin="round"
            paintOrder="stroke"
          >
            {name}
          </text>
        ))}
        <text x={0} y={0} fill="#24384f" fontSize={25} transform="translate(926 586) rotate(66)" textLength={70}>
          Vällen
        </text>
        <text x={0} y={0} fill="#2b3a4c" fontSize={20} transform="translate(1888 217) rotate(90)" textLength={105}>
          Alands hav
        </text>
      </g>
      <g fontFamily="'Liberation Sans', Arial, sans-serif" fontSize={30} fill="#fff" fillOpacity={0.5}>
        {[-94, 418, 930, 1442, 1954, 2466].map((x) => (
          <text key={x} x={x - 1} y={341} textLength={421}>
            For development purposes only
          </text>
        ))}
      </g>
      <path
        d="M1409 398.5C1406.5 398.5 1406.8 392 1405 386C1400 368 1383 355 1383 341A26 26 0 0 1 1435 341C1435 355 1418 368 1413 386C1411.200 392 1411.500 398.500 1409 398.500Z"
        fill="#da5040"
        stroke="#fff"
        strokeWidth={2}
      />
      <circle cx={1409} cy={341} r={9} fill="#7a1f1a" />
    </svg>
  );
}

function Field({ label, value, stepper }: { label: string; value?: string; stepper?: boolean }) {
  return (
    <div>
      <div className="mb-[10px] h-10 text-[28px] leading-[42px] font-bold">{label}</div>
      <div className="flex h-[68px] items-center justify-between rounded-lg border-2 border-[#cacaca] bg-white pr-[29px] pl-6 text-[28px] text-[#555] shadow-[inset_0_2px_3px_rgba(0,0,0,0.09)]">
        <span className="pt-[2px]">{value}</span>
        {stepper && (
          <span className="flex h-9 w-5 flex-col items-center justify-center gap-[9px] rounded-full border border-[#cfcfcf] bg-white shadow-[0_1px_1px_rgba(0,0,0,0.25)]">
            <Chevron up />
            <Chevron />
          </span>
        )}
      </div>
    </div>
  );
}

function Chevron({ up }: { up?: boolean }) {
  return (
    <svg width={12} height={7} viewBox="0 0 12 7" fill="none" stroke="#3f3f3f" strokeWidth={2} strokeLinecap="round" strokeLinejoin="round">
      <path d={up ? "M1.500 5.500L6 1.500L10.500 5.500" : "M1.500 1.500L6 5.500L10.500 1.500"} />
    </svg>
  );
}

function ActionButton({ children }: { children: ReactNode }) {
  return (
    <button className="block h-[68px] self-start rounded-lg border-2 border-[#3a6ca5] bg-[#447ab3] px-6 pt-[2px] text-[28px] tracking-[0.12px] text-white shadow-[inset_0_0_0_1px_#4f83b9]">
      {children}
    </button>
  );
}

function Heading({ children }: { children: ReactNode }) {
  return (
    <h4 className="mb-[59px] h-10 text-[36px] leading-[42px] tracking-[0.7px] [-webkit-text-stroke:1.1px_#333]">
      {children}
    </h4>
  );
}

function OpenIcon() {
  return (
    <svg width={30} height={24} viewBox="0 0 30 24" fill="none">
      <path d="M8 9V4Q8 1.500 11 1.500H26Q29.200 1.500 29.200 4V22.500H11V16" fill="#fdfdfd" stroke="#93a9c6" strokeWidth={1.200} />
      <path d="M8.600 7V4.500Q8.600 2 11 2H26Q28.600 2 28.600 4.500V7Z" fill="#cfe5fa" />
      <path d="M5 9.500H14.500V19L11.500 16L4 22.500L1 20L8 12.500Z" fill="#f2f2f2" stroke="#8d99ab" strokeWidth={1.200} />
    </svg>
  );
}

function RefreshIcon() {
  return (
    <svg width={30} height={32} viewBox="0 0 30 32" fill="none">
      <path
        d="M28 2V14.500H16.500L20.500 10.500A8 8 0 1 0 21.500 20.500H27.500A13.600 14 0 1 1 24.500 5.500Z"
        fill="#e3ebf9"
        stroke="#a5b0c8"
        strokeWidth={1.400}
        strokeLinejoin="round"
      />
    </svg>
  );
}

function PublishIcon() {
  return (
    <svg width={32} height={26} viewBox="0 0 32 26" fill="none" stroke="#3f97e4" strokeWidth={4}>
      <circle cx={15.800} cy={13} r={4.700} fill="#3f97e4" stroke="none" />
      <path d="M0 10.500H6C8 5 12 3 16 3C19 3 21 3.800 22.500 5" />
      <path d="M32 15.500H26C24 21 20 23 16 23C13 23 11 22.300 9 21" />
    </svg>
  );
}

function Separator() {
  return <div className="h-8 w-[2px] bg-gradient-to-b from-[#e6eaeb] via-[#c3c7c9] to-[#e0e4e5]" />;
}

export default function App() {
  return (
    <div className="h-[1800px] w-[2880px] overflow-hidden bg-gradient-to-b from-[#9aa5b0] to-black font-['Liberation_Sans',Arial,sans-serif] text-[#333]">
      <div className="flex h-full flex-col overflow-hidden rounded-[10px] bg-white">
        <header className="relative flex h-11 shrink-0 items-center justify-center border-b-2 border-[#a9a9a9] bg-gradient-to-b from-[#ececec] to-[#d1d1d1]">
          <div className="absolute top-[10px] left-4 flex gap-4">
            <span className="size-6 rounded-full border border-[#dc5a50] bg-[#ee6a5f]" />
            <span className="size-6 rounded-full border border-[#dfa23c] bg-[#f5bd4f]" />
            <span className="size-6 rounded-full border border-[#4fae41] bg-[#61c554]" />
          </div>
          <span className="pt-[3px] font-['Inter',sans-serif] text-[26px] tracking-[0.03px] whitespace-nowrap text-[#4a4a4a]">
            /private/var/folders/xp/2rxh0fcj67bfk_9m8w8rsdp00000gn/T/RtmpBRvZ6d/shinyapp1716143c492c/GeocodingShiny-master - Shiny
          </span>
        </header>
        <nav className="flex h-[46px] shrink-0 items-center border-b-2 border-[#f7f9fa] bg-[#f4f8f9] pl-[13px] font-['Noto_Sans',sans-serif] text-[22px] text-black shadow-[inset_0_-2px_0_#d6dadc]">
          <span className="mr-[15px] text-[23px] tracking-[0.65px] text-[#5c5c5c]">http://127.0.0.1:3222</span>
          <Separator />
          <div className="mr-[21px] ml-[15px] flex items-center gap-[9px]">
            <OpenIcon />
            <span className="font-medium">Open in Browser</span>
          </div>
          <Separator />
          <div className="ml-[13px]">
            <RefreshIcon />
          </div>
          <div className="mr-[22px] ml-auto flex items-center">
            <PublishIcon />
            <span className="ml-[7px] font-medium">Publish</span>
            <svg className="ml-5" width={10} height={5} viewBox="0 0 10 5">
              <path d="M0 0H10L5 5Z" fill="#000" />
            </svg>
          </div>
        </nav>
        <main className="px-[30px] pt-10">
          <h2 className="mb-5 text-[60px] leading-[66px] tracking-[1.38px] [-webkit-text-stroke:2px_#333]">
            Address Locations in World Map
          </h2>
          <section className="h-[750px] rounded-lg border-2 border-[#e2e2e2] bg-[#f4f4f4] p-[38px] shadow-[inset_0_2px_3px_rgba(0,0,0,0.05)]">
            <Field label="Enter Map Key" />
            <div className="mt-[89px] grid grid-cols-2 gap-[60px]">
              <div>
                <Heading>Get Geo Location</Heading>
                <Field label="Enter Address" value="Sweden" />
                <div className="mt-[70px]">
                  <ActionButton>Get Geo Location</ActionButton>
                </div>
              </div>
              <div>
                <Heading>Get Address</Heading>
                <div className="flex flex-col gap-[30px]">
                  <Field label="Longitude" value="18,6435" stepper />
                  <Field label="Latitude" value="60,1282" stepper />
                  <ActionButton>Get Address</ActionButton>
                </div>
              </div>
            </div>
          </section>
          <section className="relative mt-[120px] h-[714px] overflow-hidden">
            <MapDrawing />
            <div className="absolute top-[590px] right-5 flex h-[160px] w-20 flex-col items-center rounded bg-white shadow-[0_1px_4px_rgba(0,0,0,0.3)]">
              <svg width={80} height={80} viewBox="0 0 80 80" fill="#666">
                <path d="M36 18H44V32H58V40H44V54H36V40H22V32H36Z" />
              </svg>
              <div className="h-[2px] w-[60px] bg-[#e6e6e6]" />
              <div className="mt-10 h-2 w-9 bg-[#666]" />
            </div>
          </section>
        </main>
      </div>
    </div>
  );
}
